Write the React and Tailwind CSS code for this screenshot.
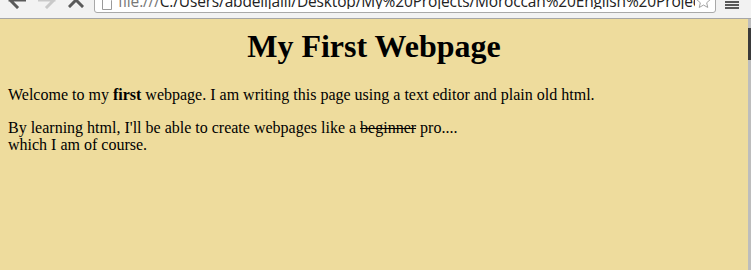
import React from "react";

function Toolbar() {
  return (
    <div className="h-[19px] shrink-0 overflow-hidden bg-[#f2f2f2] border-b border-[#a6a6a6]">
      <div className="-mt-[14px] h-[28px] flex items-center pl-[8px]">
        <svg width="18" height="18" viewBox="0 0 18 18" className="shrink-0">
          <path d="M2 9 L9 2 M2 9 L9 16 M2 9 H17" stroke="#5a5a5a" strokeWidth="3" fill="none" strokeLinecap="square" />
        </svg>
        <svg width="18" height="18" viewBox="0 0 18 18" className="shrink-0 ml-[12px]">
          <path d="M16 9 L9 2 M16 9 L9 16 M16 9 H1" stroke="#c9c9c9" strokeWidth="3" fill="none" strokeLinecap="square" />
        </svg>
        <svg width="16" height="16" viewBox="0 0 16 16" className="shrink-0 ml-[12px]">
          <path d="M2 2 L14 14 M14 2 L2 14" stroke="#5a5a5a" strokeWidth="3" fill="none" strokeLinecap="square" />
        </svg>
        <div className="ml-[10px] w-[622px] h-[26px] shrink-0 bg-white border border-[#a9a9a9] rounded-[3px] flex items-center pl-[7px] pr-[3px] overflow-hidden">
          <svg width="10" height="13" viewBox="0 0 10 13" className="shrink-0 mt-[6px]">
            <path d="M0.5 0.5 H6.5 L9.5 3.5 V12.5 H0.5 Z" stroke="#9a9a9a" fill="white" />
          </svg>
          <span className="ml-[6px] mt-[3px] flex-1 whitespace-nowrap overflow-hidden font-['Open_Sans'] text-[15.5px] leading-none tracking-[-0.15px] text-[#222]">
            <span className="text-[#777]">file:///</span>C:/Users/abdelljalil/Desktop/My%20Projects/Moroccan%20English%20Projects
          </span>
          <svg width="17" height="17" viewBox="0 0 24 24" className="shrink-0 mt-[2px]">
            <path d="M12 2.5 L14.9 8.6 L21.5 9.3 L16.5 13.8 L18 20.4 L12 17 L6 20.4 L7.5 13.8 L2.5 9.3 L9.1 8.6 Z" stroke="#9a9a9a" strokeWidth="1.3" fill="none" strokeLinejoin="round" />
          </svg>
        </div>
        <div className="ml-[9px] w-[14px] mt-[14px] flex flex-col gap-[1px] self-start pt-[1px]">
          <div className="h-[2px] bg-[#5a5a5a]" />
          <div className="h-[2px] bg-[#5a5a5a]" />
          <div className="h-[2px] bg-[#5a5a5a]" />
        </div>
      </div>
    </div>
  );
}

export default function App() {
  return (
    <div className="w-[751px] h-[270px] overflow-hidden flex flex-col bg-[#eedc9d]">
      <Toolbar />
      <div className="flex flex-1 min-h-0">
        <main className="flex-1 px-[8px] pt-[9px] font-['Liberation_Serif',serif] text-black">
          <h1 className="text-center text-[32px] font-bold leading-[37px]">My First Webpage</h1>
          <p className="mt-[21px] text-[16px] leading-[17px]">
            Welcome to my <b>first</b> webpage. I am writing this page using a text editor and plain old html.
          </p>
          <p className="mt-[16px] text-[16px] leading-[17px]">
            By learning html, I'll be able to create webpages like a <s>beginner</s> pro....
            <br />
            which I am of course.
          </p>
        </main>
        <div className="w-[3px] bg-[#bdbdbd] flex flex-col">
          <div className="mt-[9px] h-[32px] bg-[#3a3a3a]" />
        </div>
      </div>
    </div>
  );
}
